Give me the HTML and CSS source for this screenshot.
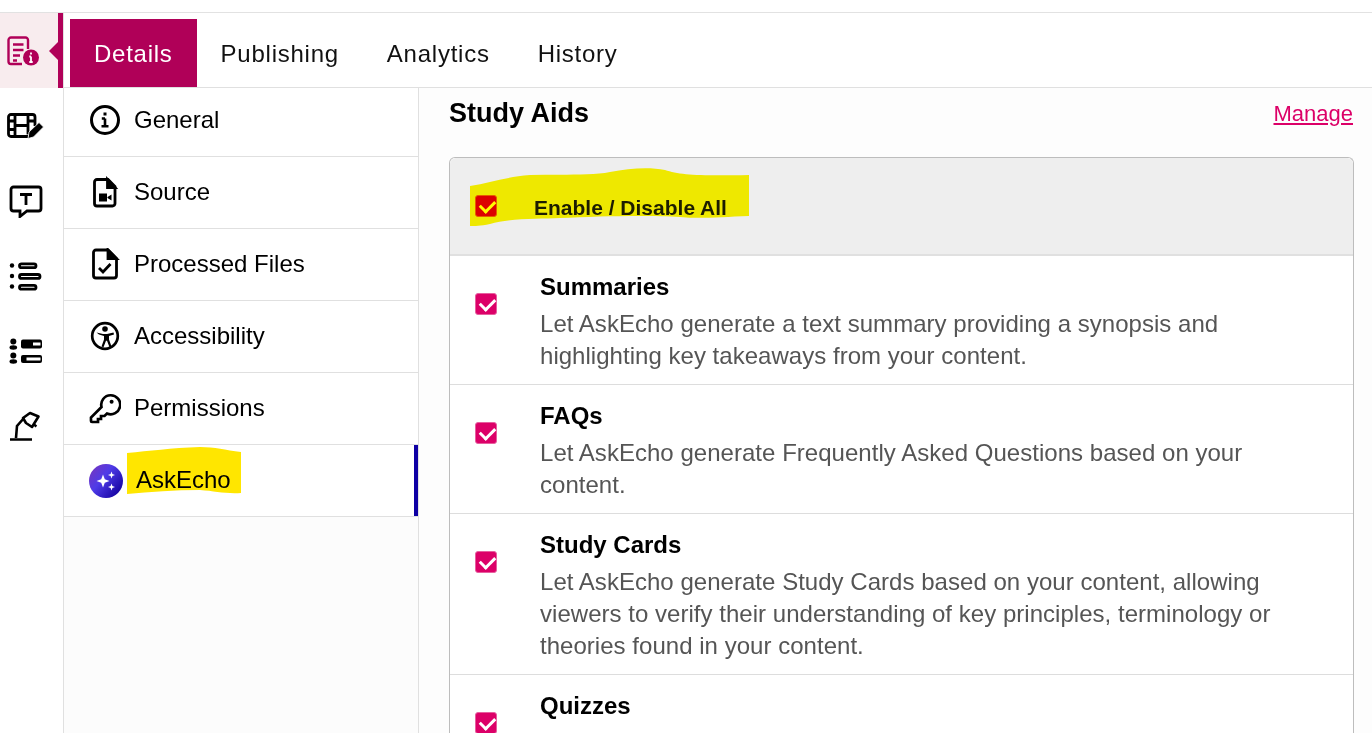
FILE: index.html
```html
<!DOCTYPE html>
<html lang="en">
<head>
    <meta charset="UTF-8">
    <title>Study Aids</title>
    <link rel="stylesheet" href="styles.css">
</head>
<body>
    <div class="app">
        <nav class="rail">
            <div class="rail-item active">
                <svg width="32" height="32" viewBox="0 0 32 32" fill="none" stroke="#b00058" stroke-width="2.400">
                    <path d="M15 29H4a2.500 2.500 0 0 1-2.500-2.500V5A2.500 2.500 0 0 1 4 2.500h14.500A2.500 2.500 0 0 1 21 5v9"/>
                    <path d="M6 9.500h10.500M6 15h10.500M6 20.500h7M6 25.500h4"/>
                    <circle cx="24" cy="22.500" r="8" fill="#b00058" stroke="none"/>
                    <path d="M24 21.500v5.500M22.300 21.500H24M22.300 27h3.400M24 17.500v2" stroke="#fff" stroke-width="1.800"/>
                </svg>
            </div>
            <div class="rail-item">
                <svg class="film" width="38" height="30" viewBox="0 0 38 30" fill="none" stroke="#000" stroke-width="2.800">
                    <path d="M22 25.500H5A2.500 2.500 0 0 1 2.500 23V6A2.500 2.500 0 0 1 5 3.500h21.500A2.500 2.500 0 0 1 29 6v9"/>
                    <path d="M9 3.500v22M22 3.500v20M2.500 10h6.500M2.500 18.500h6.500M9 14.500h13M22 10h7"/>
                    <path d="M22 27.500l1-6.500 10-9.500 4.500 4.500-10 10z" fill="#000" stroke="#fff" stroke-width="0.800"/>
                </svg>
            </div>
            <div class="rail-item">
                <svg width="34" height="34" viewBox="0 0 34 34" fill="none" stroke="#000" stroke-width="2.800">
                    <path d="M4.500 3h25A2.500 2.500 0 0 1 32 5.500v19a2.500 2.500 0 0 1-2.500 2.500H18l-7 5.500V27H4.500A2.500 2.500 0 0 1 2 24.500v-19A2.500 2.500 0 0 1 4.500 3z"/>
                    <path d="M11 10.500h12M17 10.500v10.500"/>
                </svg>
            </div>
            <div class="rail-item">
                <svg width="34" height="32" viewBox="0 0 34 32" fill="none" stroke="#000" stroke-width="2.800">
                    <circle cx="3" cy="5.500" r="2.200" fill="#000" stroke="none"/>
                    <circle cx="3" cy="16" r="2.200" fill="#000" stroke="none"/>
                    <circle cx="3" cy="26.500" r="2.200" fill="#000" stroke="none"/>
                    <rect x="10.500" y="3.800" width="16.500" height="3.900" rx="2"/>
                    <rect x="10.500" y="14.500" width="20.500" height="3.900" rx="2"/>
                    <rect x="10.500" y="25.300" width="16.500" height="3.900" rx="2"/>
                </svg>
            </div>
            <div class="rail-item">
                <svg width="34" height="26" viewBox="0 0 34 26" fill="#000">
                    <circle cx="4.300" cy="3.500" r="3"/>
                    <ellipse cx="4.300" cy="9.500" rx="3.800" ry="2.200"/>
                    <circle cx="4.300" cy="17.500" r="3"/>
                    <ellipse cx="4.300" cy="23.500" rx="3.800" ry="2.200"/>
                    <rect x="12" y="1.500" width="21" height="9" rx="2"/>
                    <rect x="12" y="17" width="21" height="8" rx="2"/>
                    <rect x="24" y="4.500" width="7.500" height="3" fill="#fff"/>
                    <rect x="17.500" y="19.500" width="14" height="3" fill="#fff"/>
                </svg>
            </div>
            <div class="rail-item">
                <svg width="32" height="34" viewBox="0 0 32 34" fill="none" stroke="#000" stroke-width="2.600">
                    <path d="M1 30.500h22M7 29l1-12 7-8"/>
                    <path d="M14 9l7-5 8.500 3.500L23 18l-6-4z" stroke-linejoin="round"/>
                    <path d="M25.500 17.500l1.500-2" stroke-width="3"/>
                </svg>
            </div>
        </nav>

        <div class="workspace">
            <header class="tabs">
                <a class="tab selected">Details</a>
                <a class="tab">Publishing</a>
                <a class="tab">Analytics</a>
                <a class="tab">History</a>
            </header>

            <div class="panels">
                <aside class="side">
                    <div class="side-row">
                        <svg class="side-icon" width="32" height="32" viewBox="0 0 32 32" fill="none" stroke="#000" stroke-width="3">
                            <circle cx="16" cy="16" r="13.500"/>
                            <path d="M16 14.500v7.500M12.800 14.500H16M12.500 22.300h7" stroke-width="2.600"/>
                            <path d="M16 8.500v3" stroke-width="3"/>
                        </svg>
                        General
                    </div>
                    <div class="side-row">
                        <svg class="side-icon" width="32" height="32" viewBox="0 0 32 32" fill="none" stroke="#000" stroke-width="2.800">
                            <path d="M8 3.500h11l7 7v17a2.500 2.500 0 0 1-2.500 2.500H8a2.500 2.500 0 0 1-2.500-2.500V6A2.500 2.500 0 0 1 8 3.500z"/>
                            <path d="M18.500 3.500v8h7.500z" fill="#000"/>
                            <path d="M10 17.500h8v8h-8zM18.500 21l4-2.500v6l-4-2.500z" fill="#000" stroke="none"/>
                        </svg>
                        Source
                    </div>
                    <div class="side-row">
                        <svg class="side-icon" width="32" height="32" viewBox="0 0 32 32" fill="none" stroke="#000" stroke-width="2.800">
                            <path d="M7 2h12l8.500 8.500V27.500A2.500 2.500 0 0 1 25 30H7a2.500 2.500 0 0 1-2.500-2.500v-23A2.500 2.500 0 0 1 7 2z"/>
                            <path d="M19 2v8.500h8.500z" fill="#000"/>
                            <path d="M10 20l4 4 7.500-8" stroke-width="2.800"/>
                        </svg>
                        Processed Files
                    </div>
                    <div class="side-row">
                        <svg class="side-icon" width="32" height="32" viewBox="0 0 32 32" fill="none" stroke="#000" stroke-width="2.700">
                            <circle cx="16" cy="16" r="12.800"/>
                            <circle cx="16" cy="9" r="2.800" fill="#000" stroke="none"/>
                            <path d="M7.500 12.500L14 14h4l6.500-1.500.5 2-5 1.500v3.500l2.500 7-2 .8-2.500-6.500h-1l-2.500 6.500-2-.8 2.500-7V16l-5-1.500z" fill="#000" stroke="none"/>
                        </svg>
                        Accessibility
                    </div>
                    <div class="side-row">
                        <svg class="side-icon" width="32" height="32" viewBox="0 0 32 32" fill="none" stroke="#000" stroke-width="2.700">
                            <path d="M12.500 15A9.500 9.500 0 1 1 18 21.500L15.500 24H12v3H9v3H3a1 1 0 0 1-1-1v-3.500z"/>
                            <circle cx="22.600" cy="9.700" r="2" fill="#000" stroke="none"/>
                        </svg>
                        Permissions
                    </div>
                    <div class="side-row current">
                        <svg class="side-icon" width="34" height="34" viewBox="0 0 34 34">
                            <defs>
                                <linearGradient id="echoFill" x1="0" y1="0" x2="1" y2="0.800">
                                    <stop offset="0" stop-color="#7c35b8"/>
                                    <stop offset="0.450" stop-color="#4f3be8"/>
                                    <stop offset="1" stop-color="#12009c"/>
                                </linearGradient>
                            </defs>
                            <circle cx="17" cy="17" r="17" fill="url(#echoFill)"/>
                            <path d="M14 10.500l1.800 4.700 4.700 1.800-4.700 1.800-1.800 4.700-1.800-4.700L7.500 17l4.700-1.800z" fill="#fff"/>
                            <path d="M22.500 7.500l.9 2.600 2.600.9-2.600.9-.9 2.600-.9-2.600-2.600-.9 2.600-.9zM22.500 19.500l.9 2.600 2.600.9-2.600.9-.9 2.600-.9-2.600-2.600-.9 2.600-.9z" fill="#fff"/>
                        </svg>
                        <span class="echo-label">AskEcho</span>
                    </div>
                </aside>

                <main class="content">
                    <div class="content-head">
                        <h2>Study Aids</h2>
                        <a class="manage" href="#">Manage</a>
                    </div>

                    <section class="card">
                        <div class="card-top">
                            <span class="check"></span>
                            <strong class="all-label">Enable / Disable All</strong>
                        </div>
                        <div class="aid">
                            <span class="check"></span>
                            <div class="aid-text">
                                <h3>Summaries</h3>
                                <p>Let AskEcho generate a text summary providing a synopsis and highlighting key takeaways from your content.</p>
                            </div>
                        </div>
                        <div class="aid">
                            <span class="check"></span>
                            <div class="aid-text">
                                <h3>FAQs</h3>
                                <p>Let AskEcho generate Frequently Asked Questions based on your content.</p>
                            </div>
                        </div>
                        <div class="aid">
                            <span class="check"></span>
                            <div class="aid-text">
                                <h3>Study Cards</h3>
                                <p>Let AskEcho generate Study Cards based on your content, allowing viewers to verify their understanding of key principles, terminology or theories found in your content.</p>
                            </div>
                        </div>
                        <div class="aid">
                            <span class="check"></span>
                            <div class="aid-text">
                                <h3>Quizzes</h3>
                            </div>
                        </div>
                    </section>
                </main>
            </div>
        </div>
    </div>

    <!-- marker strokes drawn over the screenshot -->
    <svg class="marker" width="1372" height="733" viewBox="0 0 1372 733">
        <path class="marker-a" d="M470 186C490 183 505 177 530 175C560 174 590 176 610 172C630 168 650 167 665 170C680 175 700 176 749 175V216C720 217 700 219 680 217C650 215 600 216 560 218C540 219 510 218 490 224C480 226 475 226 470 226Z"/>
        <path class="marker-b" d="M127 453C150 451 170 448 200 447C215 447 225 450 241 452V493C225 494 215 491 200 490C175 490 150 492 127 494Z"/>
    </svg>
</body>
</html>
```

FILE: styles.css
```css
* {
    box-sizing: border-box;
}

html, body {
    height: 100%;
}

body {
    margin: 0;
    background-color: #fff;
    color: #000;
    font-family: "Liberation Sans", Arial, sans-serif;
    overflow: hidden;
    position: relative;
}

.app {
    display: flex;
    height: 100%;
    padding-top: 12px;
}

/* left icon rail */
.rail {
    width: 64px;
    flex-shrink: 0;
    border-top: 1px solid #e2e2e2;
    border-right: 1px solid #e0e0e0;
}

.rail-item {
    height: 75px;
    display: flex;
    align-items: center;
    padding-left: 9px;
}

.rail-item .film {
    margin-left: -3px;
}

.rail-item.active {
    position: relative;
    background-color: #f8ecee;
    border-right: 5px solid #b00058;
    padding-left: 7px;
}

.rail-item.active::after {
    content: "";
    position: absolute;
    right: 0;
    top: 29px;
    border-top: 9px solid transparent;
    border-bottom: 9px solid transparent;
    border-right: 9px solid #b00058;
}

.workspace {
    flex: 1;
    min-width: 0;
    display: flex;
    flex-direction: column;
}

/* tabs */
.tabs {
    height: 76px;
    flex-shrink: 0;
    display: flex;
    padding: 6px 0 0 6px;
    border-top: 1px solid #e2e2e2;
    border-bottom: 1px solid #e0e0e0;
    background-color: #fff;
}

.tab {
    display: flex;
    align-items: center;
    padding: 1px 24px 0;
    font-size: 24px;
    letter-spacing: 0.75px;
    color: #111;
}

.tab.selected {
    background-color: #b00058;
    color: #fff;
}

.panels {
    flex: 1;
    display: flex;
    min-height: 0;
}

/* sub navigation */
.side {
    width: 355px;
    flex-shrink: 0;
    border-right: 1px solid #e0e0e0;
    background-color: #fcfcfc;
}

.side-row {
    height: 72px;
    display: flex;
    align-items: center;
    gap: 13px;
    padding-left: 25px;
    padding-bottom: 2px;
    font-size: 24px;
    background-color: #fff;
    border-bottom: 1px solid #e0e0e0;
}

.side-row:first-child {
    height: 69px;
    padding-bottom: 5px;
}

.side-row.current {
    position: relative;
    padding-bottom: 0;
}

.side-row.current::after {
    content: "";
    position: absolute;
    right: 0;
    top: 0;
    bottom: 0;
    width: 4px;
    background-color: #0e00a4;
}

.side-icon {
    flex-shrink: 0;
}

.echo-label {
    padding-bottom: 1px;
}

/* main column */
.content {
    flex: 1;
    min-width: 0;
    padding: 0 18px 0 30px;
    background-color: #fdfdfd;
    overflow: hidden;
}

.content-head {
    display: flex;
    align-items: center;
    justify-content: space-between;
    height: 69px;
    padding-bottom: 18px;
}

.content-head h2 {
    margin: 0;
    font-size: 27px;
}

.manage {
    font-size: 22px;
    color: #dc0068;
    margin-right: 1px;
}

.card {
    border: 1px solid #bdbdbd;
    border-bottom: 0;
    border-radius: 6px 6px 0 0;
    background-color: #fff;
}

.card-top {
    display: flex;
    align-items: center;
    height: 98px;
    padding-left: 25px;
    background-color: #eee;
    border-radius: 6px 6px 0 0;
    border-bottom: 2px solid #e0e0e0;
}

.all-label {
    margin-left: 37px;
    font-size: 21px;
    color: #1c1c1c;
    padding-top: 3px;
}

.aid {
    display: flex;
    padding: 0 24px 0 25px;
    border-bottom: 1px solid #ddd;
}

.check {
    position: relative;
    flex-shrink: 0;
    width: 22px;
    height: 22px;
    border-radius: 3px;
    background-color: #dc0068;
    border: 1px solid #e75f9f;
}

.check::after {
    content: "";
    position: absolute;
    left: 4px;
    top: 4px;
    width: 12px;
    height: 7px;
    border-left: 3px solid #fff;
    border-bottom: 3px solid #fff;
    transform: rotate(-45deg);
}

.aid .check {
    margin-top: 37px;
}

.aid-text {
    margin-left: 43px;
    padding: 17px 0 12px;
}

.aid-text h3 {
    margin: 0 0 7px;
    font-size: 24px;
    line-height: 28px;
}

.aid-text p {
    margin: 0;
    font-size: 24px;
    line-height: 32px;
    letter-spacing: 0.03px;
    color: #555;
}

/* highlighter */
.marker {
    position: absolute;
    left: 0;
    top: 0;
    pointer-events: none;
    mix-blend-mode: multiply;
}

.marker-a {
    fill: #fff900;
}

.marker-b {
    fill: #ffe600;
}
```
